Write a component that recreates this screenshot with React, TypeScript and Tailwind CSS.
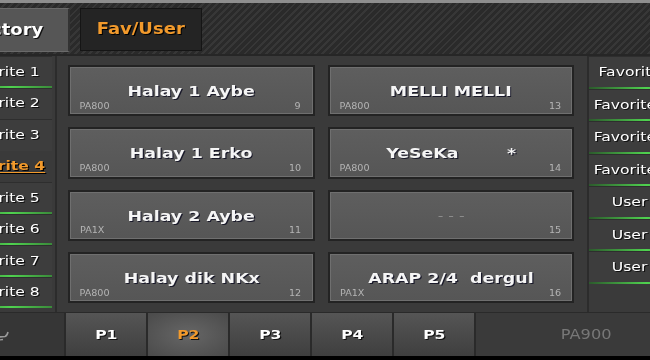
import React from "react";

const S = "inline-block scale-x-[1.2] whitespace-pre";

const leftItems = [
  { label: "Favorite 1", green: true },
  { label: "Favorite 2", green: false },
  { label: "Favorite 3", green: false },
  { label: "Favorite 4", green: false, active: true },
  { label: "Favorite 5", green: true },
  { label: "Favorite 6", green: true },
  { label: "Favorite 7", green: true },
  { label: "Favorite 8", green: true },
];

const rightItems = [
  "Favorite 9",
  "Favorite 10",
  "Favorite 11",
  "Favorite 12",
  "User 1",
  "User 2",
  "User 3",
];

const cards = [
  { title: "Halay 1 Aybe", src: "PA800", n: 9 },
  { title: "MELLI MELLI", src: "PA800", n: 13 },
  { title: "Halay 1 Erko", src: "PA800", n: 10 },
  { title: "YeSeKa        *", src: "PA800", n: 14 },
  { title: "Halay 2 Aybe", src: "PA1X", n: 11 },
  { title: "- - -", src: "", n: 15, empty: true },
  { title: "Halay dik NKx", src: "PA800", n: 12 },
  { title: "ARAP 2/4  dergul", src: "PA1X", n: 16 },
];

const pages = ["P1", "P2", "P3", "P4", "P5"];

function GreenLine() {
  return (
    <div className="h-[2px] bg-[linear-gradient(90deg,#2c5a2c,#4fd24f_60%,#3a8a3a)]" />
  );
}

function SongCard({ title, src, n, empty }: { title: string; src: string; n: number; empty?: boolean }) {
  return (
    <div className="border-2 border-[#232323] bg-[#6f6f6f] p-px">
      <div className="flex h-full flex-col bg-[linear-gradient(180deg,#5e5e5e,#565656)]">
        <div className="flex flex-1 items-center justify-center pt-[13px]">
          {empty ? (
            <span className={`${S} text-[13px] text-[#8c8c8c]`}>{title}</span>
          ) : (
            <span className={`${S} text-[14.5px] font-bold text-[#f5f5f5] [text-shadow:1px_1px_0_#1a1a2a]`}>
              {title}
            </span>
          )}
        </div>
        <div className="flex h-[11px] items-start justify-between px-[11px] text-[8px] leading-none text-[#b4b4b4]">
          <span className={S}>{src}</span>
          <span className={S}>{n}</span>
        </div>
      </div>
    </div>
  );
}

export default function App() {
  return (
    <div className="flex h-[360px] w-[650px] flex-col overflow-hidden bg-[#3a3a3a] font-['DejaVu_Sans',sans-serif]">
      <div className="h-[3px] bg-[#8e8e8e]" />

      {/* header tabs */}
      <div className="flex h-[53px] items-start overflow-hidden border-b-2 border-[#262626] bg-[repeating-linear-gradient(135deg,#2a2a2a_0px,#2a2a2a_3px,#373737_3px,#373737_5px)] pt-[5px]">
        <div className="-ml-[58px] flex h-[44px] w-[128px] items-center justify-center border border-r-2 border-[#6a6a6a] border-r-[#333] bg-[#565656]">
          <span className={`${S} text-[15px] font-bold text-white [text-shadow:1px_1px_0_#111]`}>Factory</span>
        </div>
        <div className="ml-[10px] flex h-[43px] w-[122px] items-center justify-center border border-[#151515] bg-[#242424]">
          <span className={`${S} text-[15px] font-bold text-[#f29a2c] [text-shadow:1px_1px_0_#000]`}>Fav/User</span>
        </div>
      </div>

      {/* main area */}
      <div className="flex h-[256px]">
        <div className="w-[57px] shrink-0 overflow-hidden border-r-2 border-[#2c2c2c]">
          <div className="-ml-[50px] flex w-[102px] flex-col">
            {leftItems.map((it) => (
              <div
                key={it.label}
                className={`flex h-[31.5px] flex-col ${it.active ? "" : "border-t border-[#2e2e2e] bg-[#3d3d3d]"}`}
              >
                <div className="flex flex-1 items-center justify-center">
                  {it.active ? (
                    <span className={`${S} text-[13px] font-bold text-[#f29a2c] underline underline-offset-2 [text-shadow:1px_1px_0_#000]`}>
                      {it.label}
                    </span>
                  ) : (
                    <span className={`${S} text-[13px] text-white [text-shadow:1px_1px_0_#111]`}>{it.label}</span>
                  )}
                </div>
                {it.green ? <GreenLine /> : <div className="h-[2px]" />}
              </div>
            ))}
          </div>
        </div>

        <div className="grid flex-1 grid-cols-2 grid-rows-4 gap-x-[13px] gap-y-[11px] pb-[9px] pl-[11px] pr-[13px] pt-[9px]">
          {cards.map((c) => (
            <SongCard key={c.n} {...c} />
          ))}
        </div>

        <div className="w-[63px] shrink-0 overflow-hidden border-l-2 border-[#2c2c2c]">
          <div className="flex w-[96px] flex-col">
            {rightItems.map((label) => (
              <div key={label} className="flex h-[32.5px] flex-col border-t border-[#2e2e2e] bg-[#3d3d3d]">
                <div className="flex flex-1 items-center justify-center">
                  <span className={`${S} text-[13px] text-white [text-shadow:1px_1px_0_#111]`}>{label}</span>
                </div>
                <GreenLine />
              </div>
            ))}
          </div>
        </div>
      </div>

      {/* page bar */}
      <div className="flex h-[44px] border-t border-[#2a2a2a]">
        <div className="flex w-[66px] shrink-0 items-center border-r-2 border-[#2a2a2a] bg-[#363636]">
          <svg width="10" height="14" viewBox="0 0 10 14" className="-ml-[1px]">
            <path d="M0 9 L6 8.5 Q8 8 9 4" fill="none" stroke="#9a9a9a" strokeWidth="1.6" />
            <path d="M0 12 L4 11.5" fill="none" stroke="#9a9a9a" strokeWidth="1.4" />
          </svg>
        </div>
        {pages.map((p) => (
          <div
            key={p}
            className={`flex w-[82px] shrink-0 items-center justify-center border-r-2 border-[#2a2a2a] ${
              p === "P2"
                ? "bg-[radial-gradient(ellipse_at_center,#666666,#4a4a4a)]"
                : "bg-[linear-gradient(180deg,#555555,#3f3f3f)]"
            }`}
          >
            <span
              className={`${S} text-[13px] font-bold [text-shadow:1px_1px_0_#111] ${
                p === "P2" ? "text-[#f29a2c]" : "text-white"
              }`}
            >
              {p}
            </span>
          </div>
        ))}
        <div className="flex flex-1 items-center justify-end bg-[#3a3a3a] pr-[43px]">
          <span className={`${S} text-[13.5px] text-[#777777]`}>PA900</span>
        </div>
      </div>
      <div className="h-[4px] bg-black" />
    </div>
  );
}
